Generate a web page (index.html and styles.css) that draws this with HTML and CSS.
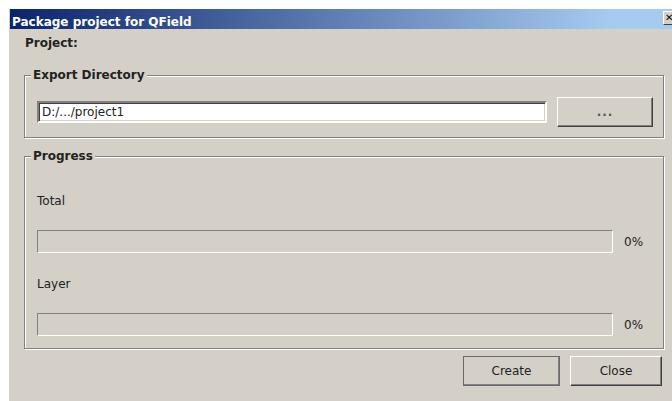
FILE: index.html
```html
<!DOCTYPE html>
<html lang="en">
<head>
<meta charset="utf-8">
<title>Package project for QField</title>
<link rel="stylesheet" href="styles.css">
</head>
<body>
<div class="window">
  <div class="titlebar">
    <span class="title">Package project for QField</span>
    <span class="close-x">&#x2715;</span>
  </div>
  <div class="content">
    <div class="project">Project:</div>

    <fieldset class="group group-export">
      <legend>Export Directory</legend>
      <div class="dir-row">
        <input class="path" type="text" value="D:/.../project1">
        <button class="btn btn-browse" type="button">...</button>
      </div>
    </fieldset>

    <fieldset class="group group-progress">
      <legend>Progress</legend>
      <div class="label">Total</div>
      <div class="bar-row">
        <div class="bar"><div class="bar-fill" style="width:0%"></div></div>
        <span class="pct">0%</span>
      </div>
      <div class="label label-layer">Layer</div>
      <div class="bar-row">
        <div class="bar"><div class="bar-fill" style="width:0%"></div></div>
        <span class="pct">0%</span>
      </div>
    </fieldset>

    <div class="actions">
      <button class="btn btn-create" type="button">Create</button>
      <button class="btn btn-close" type="button">Close</button>
    </div>
  </div>
</div>
</body>
</html>
```
FILE: styles.css
```css
html, body {
  margin: 0;
  height: 100%;
  overflow: hidden;
  background: #ffffff;
}

.window {
  margin: 9px 0 0 9px;
  width: 680px;
  height: 392px;
  background: #d4d0c8;
  font: 12px/14px "DejaVu Sans", "Liberation Sans", sans-serif;
  color: #222;
}

/* caption bar */
.titlebar {
  margin-left: 1px;
  height: 20px;
  display: flex;
  align-items: flex-start;
  background: linear-gradient(to right, #0a246a 0, #a6caf0 600px);
  color: #fff;
}

.title {
  font-weight: bold;
  padding: 6px 0 0 2px;
}

.close-x {
  margin: 2px 10px 0 auto;
  width: 16px;
  height: 14px;
  box-sizing: border-box;
  padding-left: 1px;
  background: #d4d0c8;
  border: 1px solid;
  border-color: #fff #404040 #404040 #fff;
  color: #000;
  font-size: 10px;
  line-height: 12px;
  font-weight: bold;
  text-align: left;
}

/* dialog body */
.content {
  padding: 7px 0 0 15px;
}

.project {
  font-weight: bold;
  margin-left: 1px;
}

.group {
  width: 640px;
  box-sizing: border-box;
  min-width: 0;
  margin: 0;
  border: 1px solid #808080;
  box-shadow: inset 1px 1px #fff, 1px 1px #fff;
}

.group legend {
  font-weight: bold;
  padding: 0 2px;
  margin-left: -6px;
  background: #d4d0c8;
}

.group-export {
  margin-top: 18px;
  padding: 15px 10px 10px 12px;
}

.dir-row {
  display: flex;
  align-items: center;
  gap: 10px;
}

.path {
  width: 510px;
  height: 22px;
  box-sizing: border-box;
  margin: 0;
  padding: 0 3px;
  background: #fff;
  border: 2px solid;
  border-color: #808080 #fff #fff #808080;
  box-shadow: inset 1px 1px #404040, inset -1px -1px #d4d0c8;
  font: inherit;
  color: #222;
  outline: none;
}

.btn {
  height: 30px;
  box-sizing: border-box;
  margin: 0;
  padding: 0;
  background: #d4d0c8;
  border: 1px solid;
  border-color: #fff #404040 #404040 #fff;
  box-shadow: inset -1px -1px #808080;
  font: inherit;
  color: #222;
}

.btn-browse {
  width: 96px;
  color: #555;
  font-weight: bold;
  letter-spacing: 1px;
}

.group-progress {
  margin-top: 11px;
  padding: 31px 10px 12px 12px;
}

.label {
  margin-bottom: 22px;
}

.label-layer {
  margin-top: 24px;
}

.bar-row {
  display: flex;
  align-items: center;
}

.bar {
  width: 576px;
  height: 23px;
  box-sizing: border-box;
  border: 1px solid;
  border-color: #808080 #fff #fff #808080;
  background: #d4d0c8;
}

.bar-fill {
  height: 100%;
  background: #0a246a;
}

.pct {
  margin-left: 11px;
}

.actions {
  width: 640px;
  box-sizing: border-box;
  display: flex;
  justify-content: flex-end;
  gap: 10px;
  margin-top: 7px;
  padding-right: 2px;
}

.btn-create {
  width: 97px;
  outline: 1px solid #6a6a6a;
  outline-offset: -1px;
}

.btn-close {
  width: 92px;
}
```
